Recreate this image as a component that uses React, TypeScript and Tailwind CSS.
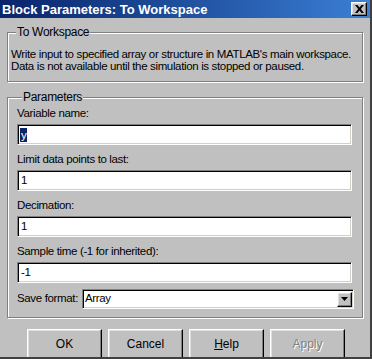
import { ReactNode } from "react";

const sunken =
  "border-t-[#808080] border-l-[#808080] border-b-white border-r-white border shadow-[inset_1px_1px_0_#000,inset_-1px_-1px_0_#d4d0c8]";
const raised =
  "border border-t-white border-l-white border-b-black border-r-black shadow-[inset_-1px_-1px_0_#808080,inset_1px_1px_0_#dfdfdf]";

function Group({ title, className, children }: { title: string; className?: string; children: ReactNode }) {
  return (
    <fieldset
      className={`border border-[#808080] shadow-[inset_1px_1px_0_#fff,1px_1px_0_#fff] ${className ?? ""}`}
    >
      <legend className="ml-[5px] px-[1px] bg-[#c0c0c0] leading-[13px] text-[12px] tracking-[-0.3px]">{title}</legend>
      {children}
    </fieldset>
  );
}

function Field({ label, value, selected }: { label: string; value: string; selected?: boolean }) {
  return (
    <div className="flex flex-col">
      <div className="h-[25px] flex items-center pt-[5px] whitespace-nowrap">{label}</div>
      <div className={`h-[21px] bg-white flex items-center pl-[2px] ${sunken}`}>
        {selected ? (
          <span className="bg-[#0a246a] text-white leading-[14px] px-[1px]">{value}</span>
        ) : (
          <span className="pl-[1px]">{value}</span>
        )}
      </div>
    </div>
  );
}

function Btn({ label, disabled, accel }: { label: string; disabled?: boolean; accel?: boolean }) {
  return (
    <button className={`w-[75px] h-[30px] bg-[#c0c0c0] ${raised} flex items-center justify-center text-[12px]`}>
      {disabled ? (
        <span className="text-[#808080] [text-shadow:1px_1px_0_#fff]">{label}</span>
      ) : accel ? (
        <span>
          <span className="underline">{label[0]}</span>
          {label.slice(1)}
        </span>
      ) : (
        <span>{label}</span>
      )}
    </button>
  );
}

export default function App() {
  return (
    <div className="w-[372px] h-[359px] bg-[#c0c0c0] text-[11.5px] tracking-[-0.35px] text-black font-['Liberation_Sans',Arial,sans-serif] border-r-2 border-b-2 border-r-[#404040] border-b-[#404040] flex flex-col overflow-hidden">
      <div className="h-[18px] shrink-0 flex items-center justify-between bg-gradient-to-r from-[#0a246a] to-[#3b7fd6] pl-[2px] pr-[3px]">
        <span className="text-white font-bold text-[13px] leading-none tracking-normal">Block Parameters: To Workspace</span>
        <div className={`w-[16px] h-[14px] bg-[#c0c0c0] ${raised} flex items-center justify-center`}>
          <svg width="9" height="8" viewBox="0 0 9 8">
            <path d="M0 0h2.5L4.5 2.5 6.5 0H9L5.8 4 9 8H6.5L4.5 5.5 2.5 8H0l3.2-4z" fill="#000" />
          </svg>
        </div>
      </div>

      <div className="flex flex-col px-[7px] pt-[8px]">
        <Group title="To Workspace" className="h-[56px] px-[3px] pt-[9px]">
          <p className="leading-[12px] whitespace-nowrap">Write input to specified array or structure in MATLAB's main workspace.</p>
          <p className="leading-[12px] whitespace-nowrap">Data is not available until the simulation is stopped or paused.</p>
        </Group>

        <Group title="Parameters" className="mt-[9px] h-[227px] px-[9px]">
          <div className="flex flex-col -mt-[5px] pr-[1px]">
            <Field label="Variable name:" value="y" selected />
            <Field label="Limit data points to last:" value="1" />
            <Field label="Decimation:" value="1" />
            <Field label="Sample time (-1 for inherited):" value="-1" />
            <div className="flex items-center mt-[6px]">
              <span className="w-[65px] shrink-0 whitespace-nowrap">Save format:</span>
              <div className={`flex-1 h-[20px] bg-white flex items-center justify-between pl-[2px] pr-[1px] -mr-[2px] ${sunken}`}>
                <span>Array</span>
                <div className={`w-[15px] h-[15px] bg-[#c0c0c0] ${raised} flex items-center justify-center`}>
                  <svg width="7" height="4" viewBox="0 0 7 4">
                    <path d="M0 0h7L3.5 4z" fill="#000" />
                  </svg>
                </div>
              </div>
            </div>
          </div>
        </Group>
      </div>

      <div className="flex gap-[6px] pl-[27px] mt-[11px] tracking-normal">
        <Btn label="OK" />
        <Btn label="Cancel" />
        <Btn label="Help" accel />
        <Btn label="Apply" disabled />
      </div>
    </div>
  );
}
